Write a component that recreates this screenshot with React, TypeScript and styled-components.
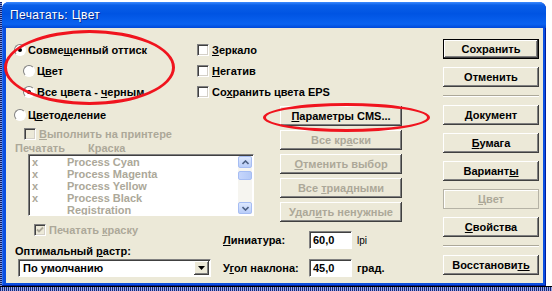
import React from 'react';
import styled, { createGlobalStyle, css } from 'styled-components';

const GlobalStyle = createGlobalStyle`
  html, body { margin: 0; padding: 0; background: #fff; }
  body { width: 552px; height: 291px; overflow: hidden; font-family: "Liberation Sans", Arial, sans-serif; }
`;

const FONT = `"Liberation Sans", Arial, sans-serif`;
const DIM = '#aca899';

const Screen = styled.div`
  width: 552px;
  height: 291px;
  display: flex;
  flex-direction: column;
  background: #fff;
`;

const TopEdge = styled.div`
  height: 2px;
`;

const Middle = styled.div`
  display: flex;
  height: 284px;
`;

const LeftEdge = styled.div`
  width: 2px;
  background: repeating-linear-gradient(180deg, #0c1d6e 0 1px, #7d95dc 1px 2px);
`;

const BottomEdge = styled.div`
  flex: 1;
  background: repeating-linear-gradient(90deg, #13257d 0 1px, #9aa9e0 1px 2px);
  border-top: 1px solid #000;
`;

const Window = styled.div`
  width: 544px;
  display: flex;
  flex-direction: column;
  background: #0b4fe0;
  border-radius: 7px 7px 0 0;
  padding: 0 3px 3px 4px;
  box-sizing: border-box;
  box-shadow: inset -1px -1px #001ea0, inset 1px 0 #2a6cf0;
`;

const TitleBar = styled.div`
  height: 26px;
  margin: 0 -3px 0 -4px;
  padding: 0 8px;
  display: flex;
  align-items: center;
  border-radius: 7px 7px 0 0;
  background: linear-gradient(180deg, #3d8bff 0%, #0a5fe8 12%, #0054e3 45%, #0a62f0 85%, #0048d8 100%);
  color: #fff;
  font: 12px ${FONT};
  letter-spacing: 0.4px;
  text-shadow: 1px 1px #0a2a8a;
`;

const Body = styled.div`
  position: relative;
  flex: 1;
  display: flex;
  background: #ece9d8;
  padding: 11px 0 0 8px;
  font: bold 11px ${FONT};
  color: #000;
`;

const Main = styled.div`
  width: 429px;
  display: flex;
  flex-direction: column;
`;

const Side = styled.div`
  width: 96px;
  display: flex;
  flex-direction: column;
`;

const Row = styled.div`
  display: flex;
`;

const Group = styled.div<{ $w?: number; $top?: number }>`
  display: flex;
  flex-direction: column;
  ${p => p.$w && css`width: ${p.$w}px;`}
  margin-top: ${p => p.$top ?? 0}px;
`;

const Option = styled.label<{ $h?: number; $indent?: number; $dim?: boolean }>`
  display: flex;
  align-items: center;
  gap: 2px;
  height: ${p => p.$h ?? 21}px;
  padding-left: ${p => p.$indent ?? 0}px;
  color: ${p => (p.$dim ? DIM : '#000')};
  white-space: nowrap;
`;

const RadioDot = styled.span<{ $on?: boolean }>`
  width: 12px;
  height: 12px;
  border-radius: 50%;
  background: #fff;
  box-sizing: border-box;
  border: 1px solid;
  border-color: #808080 #fff #fff #808080;
  display: flex;
  align-items: center;
  justify-content: center;
  &::after {
    content: '';
    width: 4px;
    height: 4px;
    border-radius: 50%;
    background: ${p => (p.$on ? '#000' : 'transparent')};
  }
`;

const Box = styled.span<{ $dim?: boolean }>`
  width: 12px;
  height: 12px;
  box-sizing: border-box;
  margin-right: 1px;
  background: ${p => (p.$dim ? '#ece9d8' : '#fff')};
  border: 1px solid;
  border-color: #808080 #fff #fff #808080;
  box-shadow: inset 1px 1px #404040, inset -1px -1px #d4d0c8;
  display: flex;
  align-items: center;
  justify-content: center;
`;

const Headers = styled.div`
  height: 12px;
  display: flex;
  align-items: center;
  padding-left: 1px;
  color: ${DIM};
  span:first-child { width: 73px; }
`;

const ListBox = styled.div`
  margin-left: 14px;
  width: 226px;
  height: 62px;
  box-sizing: border-box;
  background: #fff;
  border: 1px solid;
  border-color: #808080 #fff #fff #808080;
  box-shadow: inset 1px 1px #404040;
  display: flex;
`;

const Items = styled.div`
  flex: 1;
  padding: 1px 0 0 3px;
  overflow: hidden;
  color: ${DIM};
`;

const Item = styled.div`
  height: 12px;
  line-height: 12px;
  display: flex;
  span:first-child { width: 35px; }
`;

const ScrollBar = styled.div`
  width: 14px;
  margin: 1px 1px 1px 0;
  background: #f6f5f0;
  display: flex;
  flex-direction: column;
  justify-content: space-between;
  position: relative;
`;

const ScrollBtn = styled.div`
  height: 12px;
  border-radius: 2px;
  background: linear-gradient(180deg, #dde8fe, #b9cdf8);
  border: 1px solid #a6bdf3;
  box-sizing: border-box;
  display: flex;
  align-items: center;
  justify-content: center;
`;

const Thumb = styled.div`
  position: absolute;
  left: 0;
  right: 0;
  top: 15px;
  height: 9px;
  border-radius: 2px;
  background: linear-gradient(90deg, #c6d6fc, #b4c9f6);
  border: 1px solid #a6bdf3;
  box-sizing: border-box;
`;

const Button = styled.button<{ $default?: boolean; $flat?: boolean; $gap?: number }>`
  height: 20px;
  width: 100%;
  flex: none;
  margin: 0 0 ${p => p.$gap ?? 0}px;
  padding: 0;
  font: bold 11px ${FONT};
  color: ${p => (p.disabled ? DIM : '#000')};
  background: #ece9d8;
  border: ${p => (p.$default ? '1px solid #000' : 'none')};
  box-sizing: border-box;
  box-shadow: inset -1px -1px #404040, inset 1px 1px #fff, inset -2px -2px #808080;
  ${p => p.$flat && css`
    border: 1px solid #b5b2a5;
    box-shadow: inset 1px 1px #fff;
  `}
`;

const Separator = styled.div`
  height: 2px;
  margin-bottom: 8px;
  border-top: 1px solid #aca899;
  border-bottom: 1px solid #fff;
  box-sizing: border-box;
`;

const MidButtons = styled.div`
  width: 122px;
  margin: 4px 0 0 14px;
  display: flex;
  flex-direction: column;
  gap: 4px;
`;

const Caption = styled.div<{ $h: number }>`
  height: ${p => p.$h}px;
  display: flex;
  align-items: flex-end;
  padding: 0 0 2px 1px;
  box-sizing: border-box;
`;

const Select = styled.div`
  margin-left: 4px;
  width: 193px;
  height: 18px;
  box-sizing: border-box;
  background: #fff;
  border: 1px solid;
  border-color: #808080 #fff #fff #808080;
  box-shadow: inset 1px 1px #404040;
  display: flex;
  align-items: center;
  padding: 0 1px 0 4px;
  span { flex: 1; }
`;

const DropBtn = styled.div`
  width: 15px;
  height: 14px;
  background: #ece9d8;
  box-shadow: inset -1px -1px #404040, inset 1px 1px #fff, inset -2px -2px #808080;
  display: flex;
  align-items: center;
  justify-content: center;
`;

const Fields = styled.div`
  margin: 9px 0 0 3px;
  display: flex;
  flex-direction: column;
  gap: 10px;
`;

const Field = styled.div`
  display: flex;
  align-items: center;
  height: 18px;
  & > span:first-child { width: 86px; }
`;

const Input = styled.div`
  width: 43px;
  height: 18px;
  box-sizing: border-box;
  background: #fff;
  border: 1px solid;
  border-color: #808080 #fff #fff #808080;
  box-shadow: inset 1px 1px #404040;
  padding: 2px 0 0 3px;
`;

const Unit = styled.span<{ $light?: boolean }>`
  margin-left: 5px;
  font-weight: ${p => (p.$light ? 'normal' : 'bold')};
  font-size: ${p => (p.$light ? 10 : 11)}px;
`;

const Ellipse = styled.div<{ $x: number; $y: number; $w: number; $h: number }>`
  position: absolute;
  left: ${p => p.$x}px;
  top: ${p => p.$y}px;
  width: ${p => p.$w}px;
  height: ${p => p.$h}px;
  border: 3px solid #f0141e;
  border-radius: 50%;
  box-sizing: border-box;
  pointer-events: none;
`;

const Chevron = ({ up }: { up?: boolean }) => (
  <svg width="7" height="5" viewBox="0 0 7 5">
    <path d={up ? 'M0.5 4L3.5 1L6.5 4' : 'M0.5 1L3.5 4L6.5 1'} fill="none" stroke="#4d6185" strokeWidth="1.6" />
  </svg>
);

const Check = () => (
  <svg width="8" height="8" viewBox="0 0 8 8">
    <path d="M1 3.5L3 5.5L7 1.5" fill="none" stroke={DIM} strokeWidth="1.8" />
  </svg>
);

const inks = ['Process Cyan', 'Process Magenta', 'Process Yellow', 'Process Black', 'Registration'];

export default function App() {
  return (
    <Screen>
      <GlobalStyle />
      <TopEdge />
      <Middle>
        <LeftEdge />
        <Window>
          <TitleBar>Печатать: Цвет</TitleBar>
          <Body>
            <Main>
              <Row>
                <Group $w={183}>
                  <Option><RadioDot $on /><span>Совме<u>щ</u>енный оттиск</span></Option>
                  <Option $indent={9}><RadioDot /><span>Ц<u>в</u>ет</span></Option>
                  <Option $indent={9}><RadioDot $on /><span>Все цвета - <u>ч</u>ерным</span></Option>
                </Group>
                <Group>
                  <Option><Box /><span><u>З</u>еркало</span></Option>
                  <Option><Box /><span><u>Н</u>егатив</span></Option>
                  <Option><Box /><span>Со<u>х</u>ранить цвета EPS</span></Option>
                </Group>
              </Row>
              <Row>
                <Group $w={252} $top={3}>
                  <Option $h={20}><RadioDot /><span>Ц<u>в</u>етоделение</span></Option>
                  <Option $h={17} $indent={10} $dim><Box $dim /><span><u>В</u>ыполнить на принтере</span></Option>
                  <Headers><span>Печатать</span><span>Краска</span></Headers>
                  <ListBox>
                    <Items>
                      {inks.map((ink, i) => (
                        <Item key={ink}><span>{i < 4 ? 'x' : ''}</span><span>{ink}</span></Item>
                      ))}
                    </Items>
                    <ScrollBar>
                      <ScrollBtn><Chevron up /></ScrollBtn>
                      <Thumb />
                      <ScrollBtn><Chevron /></ScrollBtn>
                    </ScrollBar>
                  </ListBox>
                </Group>
                <MidButtons>
                  <Button><u>П</u>араметры CMS...</Button>
                  <Button disabled>Все кр<u>а</u>ски</Button>
                  <Button disabled><u>О</u>тменить выбор</Button>
                  <Button disabled>Все <u>т</u>риадными</Button>
                  <Button disabled>Удал<u>и</u>ть ненужные</Button>
                </MidButtons>
              </Row>
              <Row>
                <Group $w={206}>
                  <Option $h={16} $indent={20} $dim><Box $dim><Check /></Box><span>Печатать <u>к</u>раску</span></Option>
                  <Caption $h={21}><span>Оптимальный <u>р</u>астр:</span></Caption>
                  <Select>
                    <span>По умолчанию</span>
                    <DropBtn>
                      <svg width="7" height="4" viewBox="0 0 7 4"><path d="M0 0H7L3.5 4Z" fill="#000" /></svg>
                    </DropBtn>
                  </Select>
                </Group>
                <Fields>
                  <Field><span><u>Л</u>иниатура:</span><Input>60,0</Input><Unit $light>lpi</Unit></Field>
                  <Field><span>У<u>г</u>ол наклона:</span><Input>45,0</Input><Unit>град.</Unit></Field>
                </Fields>
              </Row>
            </Main>
            <Side>
              <Button $default $gap={8}>Сохранить</Button>
              <Button $gap={8}>Отменить</Button>
              <Separator />
              <Button $gap={8}><u>Д</u>окумент</Button>
              <Button $gap={8}><u>Б</u>умага</Button>
              <Button $gap={8}>Вариант<u>ы</u></Button>
              <Button $gap={8} $flat disabled><u>Ц</u>вет</Button>
              <Button $gap={8}><u>С</u>войства</Button>
              <Separator />
              <Button>Восстанови<u>ть</u></Button>
            </Side>
            <Ellipse $x={-2} $y={2} $w={171} $h={75} />
            <Ellipse $x={257} $y={75} $w={167} $h={29} />
          </Body>
        </Window>
      </Middle>
      <BottomEdge />
    </Screen>
  );
}
